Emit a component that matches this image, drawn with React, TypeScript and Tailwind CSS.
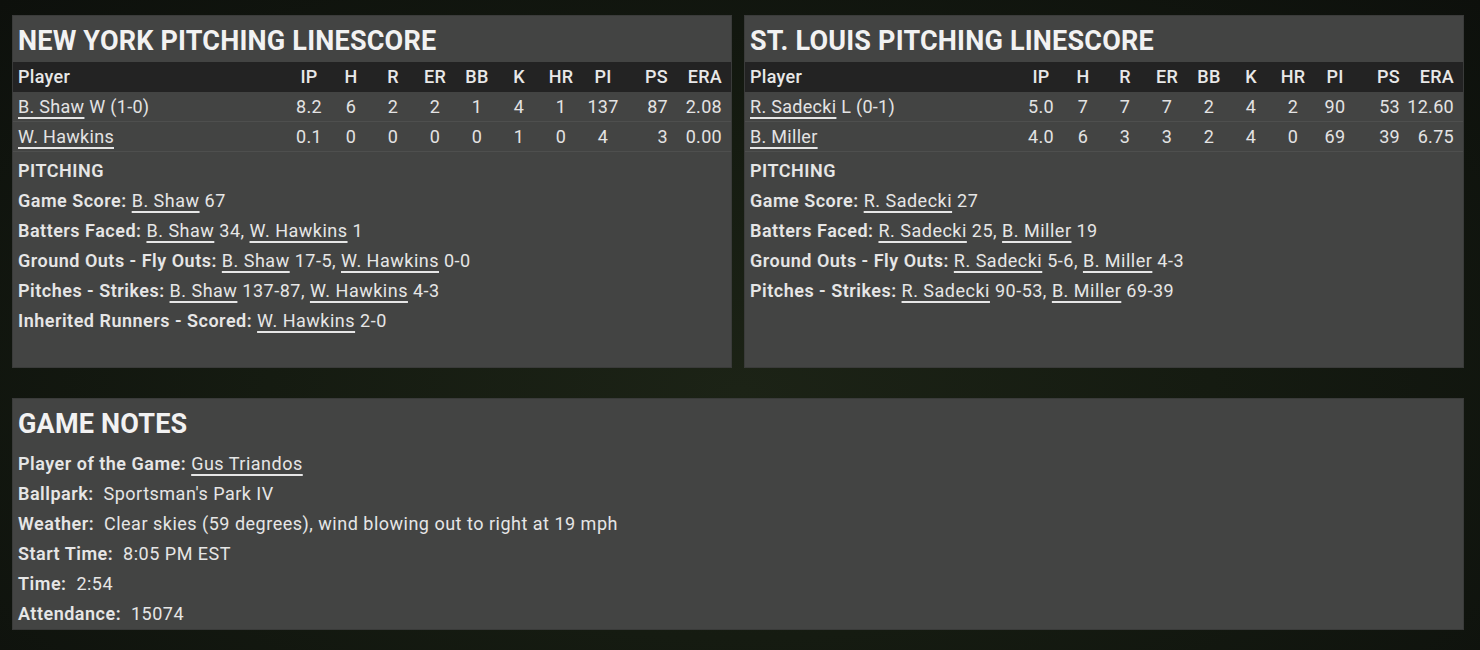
import React from "react";

type Pitcher = {
  name: string;
  note?: string;
  ip: string;
  h: number;
  r: number;
  er: number;
  bb: number;
  k: number;
  hr: number;
  pi: number;
  ps: number;
  era: string;
};

type Part = string | { link: string };
type Line = { label: string; parts: Part[] };

const nyPitchers: Pitcher[] = [
  { name: "B. Shaw", note: "W (1-0)", ip: "8.2", h: 6, r: 2, er: 2, bb: 1, k: 4, hr: 1, pi: 137, ps: 87, era: "2.08" },
  { name: "W. Hawkins", ip: "0.1", h: 0, r: 0, er: 0, bb: 0, k: 1, hr: 0, pi: 4, ps: 3, era: "0.00" },
];

const stlPitchers: Pitcher[] = [
  { name: "R. Sadecki", note: "L (0-1)", ip: "5.0", h: 7, r: 7, er: 7, bb: 2, k: 4, hr: 2, pi: 90, ps: 53, era: "12.60" },
  { name: "B. Miller", ip: "4.0", h: 6, r: 3, er: 3, bb: 2, k: 4, hr: 0, pi: 69, ps: 39, era: "6.75" },
];

const nyLines: Line[] = [
  { label: "Game Score:", parts: [{ link: "B. Shaw" }, " 67"] },
  { label: "Batters Faced:", parts: [{ link: "B. Shaw" }, " 34, ", { link: "W. Hawkins" }, " 1"] },
  { label: "Ground Outs - Fly Outs:", parts: [{ link: "B. Shaw" }, " 17-5, ", { link: "W. Hawkins" }, " 0-0"] },
  { label: "Pitches - Strikes:", parts: [{ link: "B. Shaw" }, " 137-87, ", { link: "W. Hawkins" }, " 4-3"] },
  { label: "Inherited Runners - Scored:", parts: [{ link: "W. Hawkins" }, " 2-0"] },
];

const stlLines: Line[] = [
  { label: "Game Score:", parts: [{ link: "R. Sadecki" }, " 27"] },
  { label: "Batters Faced:", parts: [{ link: "R. Sadecki" }, " 25, ", { link: "B. Miller" }, " 19"] },
  { label: "Ground Outs - Fly Outs:", parts: [{ link: "R. Sadecki" }, " 5-6, ", { link: "B. Miller" }, " 4-3"] },
  { label: "Pitches - Strikes:", parts: [{ link: "R. Sadecki" }, " 90-53, ", { link: "B. Miller" }, " 69-39"] },
];

const cols = ["IP", "H", "R", "ER", "BB", "K", "HR", "PI"];

function PlayerLink({ children }: { children: React.ReactNode }) {
  return (
    <span className="underline decoration-[1.5px] underline-offset-[4px] decoration-[#e6e6e6]">
      {children}
    </span>
  );
}

function Linescore({ title, pitchers, lines }: { title: string; pitchers: Pitcher[]; lines: Line[] }) {
  return (
    <section className="flex-1 h-[353px] bg-[#434443] border border-[#3a3b3a]">
      <h2 className="h-[46px] pt-[5px] px-[5px] flex items-center text-[27px] font-bold tracking-[0.2px] text-[#f2f2f2]">
        {title}
      </h2>
      <div className="flex h-[30px] items-center bg-[#232323] px-[5px] pr-[9px] pb-[2px] text-[18px] tracking-[0.3px] font-medium text-[#e8e8e8]">
        <div className="flex-1">Player</div>
        {cols.map((c) => (
          <div key={c} className="w-[42px] text-center">{c}</div>
        ))}
        <div className="w-[44px] text-right">PS</div>
        <div className="w-[54px] text-right">ERA</div>
      </div>
      {pitchers.map((p) => (
        <div key={p.name} className="flex h-[30px] items-center border-b border-[#4e4f4e] px-[5px] pr-[9px] text-[18px] tracking-[0.3px] text-[#e3e3e3]">
          <div className="flex-1">
            <PlayerLink>{p.name}</PlayerLink>
            {p.note && <span> {p.note}</span>}
          </div>
          {[p.ip, p.h, p.r, p.er, p.bb, p.k, p.hr, p.pi].map((v, i) => (
            <div key={i} className="w-[42px] text-center">{v}</div>
          ))}
          <div className="w-[44px] text-right">{p.ps}</div>
          <div className="w-[54px] text-right">{p.era}</div>
        </div>
      ))}
      <div className="px-[5px] pt-[3px] text-[18px] tracking-[0.5px] text-[#e6e6e6]">
        <div className="h-[30px] flex items-center font-semibold">PITCHING</div>
        {lines.map((l) => (
          <div key={l.label} className="h-[30px] flex items-center whitespace-pre">
            <span className="font-semibold">{l.label} </span>
            {l.parts.map((part, i) =>
              typeof part === "string" ? (
                <span key={i}>{part}</span>
              ) : (
                <PlayerLink key={i}>{part.link}</PlayerLink>
              )
            )}
          </div>
        ))}
      </div>
    </section>
  );
}

const notes: { label: string; value: string; link?: boolean }[] = [
  { label: "Player of the Game:", value: "Gus Triandos", link: true },
  { label: "Ballpark:", value: "Sportsman's Park IV" },
  { label: "Weather:", value: "Clear skies (59 degrees), wind blowing out to right at 19 mph" },
  { label: "Start Time:", value: "8:05 PM EST" },
  { label: "Time:", value: "2:54" },
  { label: "Attendance:", value: "15074" },
];

export default function App() {
  return (
    <main
      className="min-h-[650px] w-[1480px] bg-[radial-gradient(ellipse_at_50%_60%,#1c2316_0%,#151b11_45%,#0d100c_100%)] pl-[12px] pr-[16px] pt-[15px] text-[#e6e6e6]"
      style={{ fontFamily: "Roboto, 'Noto Sans', sans-serif" }}
    >
      <div className="flex gap-[12px]">
        <Linescore title="NEW YORK PITCHING LINESCORE" pitchers={nyPitchers} lines={nyLines} />
        <Linescore title="ST. LOUIS PITCHING LINESCORE" pitchers={stlPitchers} lines={stlLines} />
      </div>

      <section className="mt-[30px] h-[232px] bg-[#434443] border border-[#3a3b3a] px-[5px]">
        <h2 className="h-[49px] flex items-center pt-[2px] text-[27px] font-bold tracking-[0.2px] text-[#f2f2f2]">
          GAME NOTES
        </h2>
        {notes.map((n) => (
          <div key={n.label} className="h-[30px] flex items-center whitespace-pre text-[18px] tracking-[0.5px]">
            <span className="font-semibold">{n.label}</span>
            {n.link ? (
              <>
                <span> </span>
                <PlayerLink>{n.value}</PlayerLink>
              </>
            ) : (
              <span>{"  " + n.value}</span>
            )}
          </div>
        ))}
      </section>
    </main>
  );
}
